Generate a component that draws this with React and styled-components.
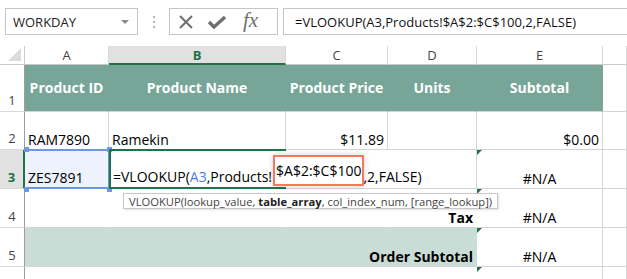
import React from 'react';
import styled, { createGlobalStyle, css } from 'styled-components';

const GlobalStyle = createGlobalStyle`
  html, body { margin: 0; padding: 0; background: #fff; }
  body {
    font-family: "Open Sans", "Liberation Sans", sans-serif;
    color: #000;
    overflow: hidden;
  }
`;

const GRID = '#d4d4d4';
const TEAL = '#77a698';
const PALE = '#c9dcd6';
const GREEN = '#217346';

const Page = styled.div`
  position: relative;
  width: 627px;
  height: 279px;
  overflow: hidden;
`;

/* ---------- formula bar ---------- */

const Toolbar = styled.div`
  display: flex;
  align-items: center;
  height: 27px;
  padding: 8px 0 0 5px;
  margin-bottom: 11px;
`;

const NameBox = styled.div`
  box-sizing: border-box;
  width: 133px;
  height: 27px;
  border: 1px solid #c6c6c6;
  display: flex;
  align-items: center;
  justify-content: space-between;
  padding: 0 8px 0 7px;
  font-size: 13px;
  color: #222;
`;

const DropArrow = styled.span`
  width: 0;
  height: 0;
  border-left: 4px solid transparent;
  border-right: 4px solid transparent;
  border-top: 4px solid #8a8a8a;
`;

const Grip = styled.div`
  width: 31px;
  display: flex;
  flex-direction: column;
  align-items: center;
  gap: 3px;
`;

const Dot = styled.span`
  width: 2px;
  height: 2px;
  background: #b5b5b5;
`;

const ButtonGroup = styled.div`
  box-sizing: border-box;
  width: 109px;
  height: 27px;
  border: 1px solid #c6c6c6;
  display: flex;
  align-items: center;
  padding-left: 9px;
  gap: 14px;
`;

const IconBtn = styled.span`
  display: flex;
  align-items: center;
  color: #6f6f6f;
`;

const Fx = styled.span`
  font-family: "Liberation Serif", "DejaVu Serif", serif;
  font-style: italic;
  font-size: 21px;
  color: #6f6f6f;
  margin-left: 2px;
  margin-top: -3px;
`;

const FormulaBox = styled.div`
  box-sizing: border-box;
  flex: 1;
  height: 27px;
  margin-left: 5px;
  border: 1px solid #c6c6c6;
  border-right: none;
  display: flex;
  align-items: center;
  padding-left: 11px;
  font-size: 13px;
  white-space: nowrap;
  color: #111;
`;

/* ---------- sheet ---------- */

const Sheet = styled.div`
  display: grid;
  grid-template-columns: 25px 84px 177px 102px 89px 126px 1fr;
  grid-template-rows: 19px 47px 38px 39px 39px 39px 40px;
`;

const Corner = styled.div`
  box-sizing: border-box;
  border-right: 1px solid #c9c9c9;
  border-bottom: 1px solid #c9c9c9;
  position: relative;
  &::after {
    content: '';
    position: absolute;
    right: 3px;
    bottom: 3px;
    width: 0;
    height: 0;
    border-left: 13px solid transparent;
    border-bottom: 13px solid #dcdcdc;
  }
`;

const ColHead = styled.div`
  box-sizing: border-box;
  display: flex;
  align-items: center;
  justify-content: center;
  font-size: 13px;
  color: #444;
  border-right: 1px solid #d8d8d8;
  border-bottom: 1px solid #c9c9c9;
  ${(p) =>
    p.$active &&
    css`
      background: #e1e1e1;
      color: ${GREEN};
      font-weight: 700;
      border-bottom: 2px solid ${GREEN};
    `}
`;

const RowHead = styled.div`
  box-sizing: border-box;
  display: flex;
  align-items: flex-end;
  justify-content: center;
  padding-bottom: 2px;
  font-size: 13px;
  color: #444;
  border-right: 1px solid #9e9e9e;
  border-bottom: 1px solid #dadada;
  ${(p) =>
    p.$active &&
    css`
      background: #e1e1e1;
      color: ${GREEN};
      font-weight: 700;
      border-right: 2px solid ${GREEN};
    `}
`;

const justify = { left: 'flex-start', right: 'flex-end', center: 'center' };

const Cell = styled.div`
  box-sizing: border-box;
  position: relative;
  display: flex;
  align-items: ${(p) => (p.$middle ? 'center' : 'flex-end')};
  justify-content: ${(p) => justify[p.$align || 'left']};
  padding: 0 3px 0 3px;
  font-size: 14px;
  line-height: 18px;
  white-space: nowrap;
  background: ${(p) => p.$bg || 'transparent'};
  color: ${(p) => p.$color || '#000'};
  font-weight: ${(p) => (p.$bold ? 700 : 400)};
  border-bottom: 1px solid ${GRID};
  border-right: 1px solid ${(p) => (p.$noRight ? p.$bg || 'transparent' : GRID)};
  ${(p) =>
    p.$tri &&
    css`
      &::before {
        content: '';
        position: absolute;
        left: 0;
        top: 0;
        border-top: 5px solid ${GREEN};
        border-right: 5px solid transparent;
      }
    `}
`;

const HeadCell = styled(Cell).attrs({ $middle: true, $align: 'center', $bold: true, $bg: TEAL, $color: '#fff', $noRight: true })`
  font-size: 14px;
`;

const RefCell = styled(Cell)`
  background: #edf2fc;
  border: none;
  padding-bottom: 2px;
  &::after {
    content: '';
    position: absolute;
    inset: -1px -1px 0 0;
    border: 2px solid #6b97e6;
    border-left: none;
  }
`;

const Handle = styled.span`
  position: absolute;
  width: 5px;
  height: 5px;
  background: #6b97e6;
  z-index: 2;
  ${(p) => (p.$top ? 'top: -3px;' : 'bottom: -3px;')}
  ${(p) => (p.$left ? 'left: -1px;' : 'right: -3px;')}
`;

const EditCell = styled(Cell)`
  z-index: 3;
  border-top: 2px solid ${GREEN};
  border-left: 2px solid ${GREEN};
  border-bottom: 2px solid ${GREEN};
  border-right: none;
  margin-top: -1px;
  padding-left: 2px;
  padding-bottom: 1px;
  overflow: visible;
`;

const RefText = styled.span`
  color: #4a7fe0;
`;

const RangeText = styled.span`
  padding: 5px 1px 4px;
  margin: 0 -1px 0 1px;
  border: 2.5px solid #f47a5c;
  background: #fff;
  box-shadow: 0 0 6px rgba(0, 0, 0, 0.18);
`;

const Tooltip = styled.div`
  position: absolute;
  left: 123px;
  top: 193px;
  z-index: 5;
  box-sizing: border-box;
  height: 16px;
  padding: 0 5px;
  display: flex;
  align-items: center;
  background: #fff;
  border: 1px solid #c8c8c8;
  box-shadow: 1px 1px 2px rgba(0, 0, 0, 0.12);
  font-size: 11.2px;
  color: #444;
  white-space: nowrap;
`;

const Bold = styled.b`
  color: #222;
`;

const XIcon = () => (
  <svg width="14" height="14" viewBox="0 0 14 14">
    <path d="M1 1 L13 13 M13 1 L1 13" stroke="currentColor" strokeWidth="2" fill="none" />
  </svg>
);

const CheckIcon = () => (
  <svg width="20" height="14" viewBox="0 0 20 14">
    <path d="M2 7 L7 12 L18 2" stroke="currentColor" strokeWidth="3.4" fill="none" strokeLinejoin="miter" />
  </svg>
);

const formula = '=VLOOKUP(A3,Products!$A$2:$C$100,2,FALSE)';

export default function App() {
  return (
    <Page>
      <GlobalStyle />
      <Toolbar>
        <NameBox>
          WORKDAY
          <DropArrow />
        </NameBox>
        <Grip>
          <Dot />
          <Dot />
          <Dot />
        </Grip>
        <ButtonGroup>
          <IconBtn>
            <XIcon />
          </IconBtn>
          <IconBtn>
            <CheckIcon />
          </IconBtn>
          <Fx>fx</Fx>
        </ButtonGroup>
        <FormulaBox>{formula}</FormulaBox>
      </Toolbar>

      <Sheet>
        <Corner />
        <ColHead>A</ColHead>
        <ColHead $active>B</ColHead>
        <ColHead>C</ColHead>
        <ColHead>D</ColHead>
        <ColHead>E</ColHead>
        <ColHead />

        <RowHead>1</RowHead>
        <HeadCell>Product ID</HeadCell>
        <HeadCell>Product Name</HeadCell>
        <HeadCell>Product Price</HeadCell>
        <HeadCell>Units</HeadCell>
        <HeadCell>Subtotal</HeadCell>
        <Cell />

        <RowHead>2</RowHead>
        <Cell>RAM7890</Cell>
        <Cell>Ramekin</Cell>
        <Cell $align="right">$11.89</Cell>
        <Cell />
        <Cell $align="right">$0.00</Cell>
        <Cell />

        <RowHead $active>3</RowHead>
        <RefCell>
          ZES7891
          <Handle $top $left />
          <Handle $top />
          <Handle $left />
          <Handle />
        </RefCell>
        <EditCell>
          =VLOOKUP(<RefText>A3</RefText>,Products!<RangeText>$A$2:$C$100</RangeText>,2,FALSE)
        </EditCell>
        <Cell $noRight />
        <Cell />
        <Cell $align="center" $tri>#N/A</Cell>
        <Cell />

        <RowHead>4</RowHead>
        <Cell $noRight />
        <Cell $noRight />
        <Cell $noRight />
        <Cell $noRight $align="right" $bold>Tax</Cell>
        <Cell $align="center" $tri>#N/A</Cell>
        <Cell />

        <RowHead>5</RowHead>
        <Cell $noRight $bg={PALE} />
        <Cell $noRight $bg={PALE} />
        <Cell $noRight $bg={PALE} />
        <Cell $noRight $bg={PALE} $align="right" $bold>Order Subtotal</Cell>
        <Cell $align="center" $tri>#N/A</Cell>
        <Cell />

        <RowHead />
        <Cell $noRight />
        <Cell $noRight />
        <Cell $noRight />
        <Cell $noRight />
        <Cell $tri />
        <Cell />
      </Sheet>

      <Tooltip>
        VLOOKUP(lookup_value,&nbsp;<Bold>table_array</Bold>, col_index_num, [range_lookup])
      </Tooltip>
    </Page>
  );
}
